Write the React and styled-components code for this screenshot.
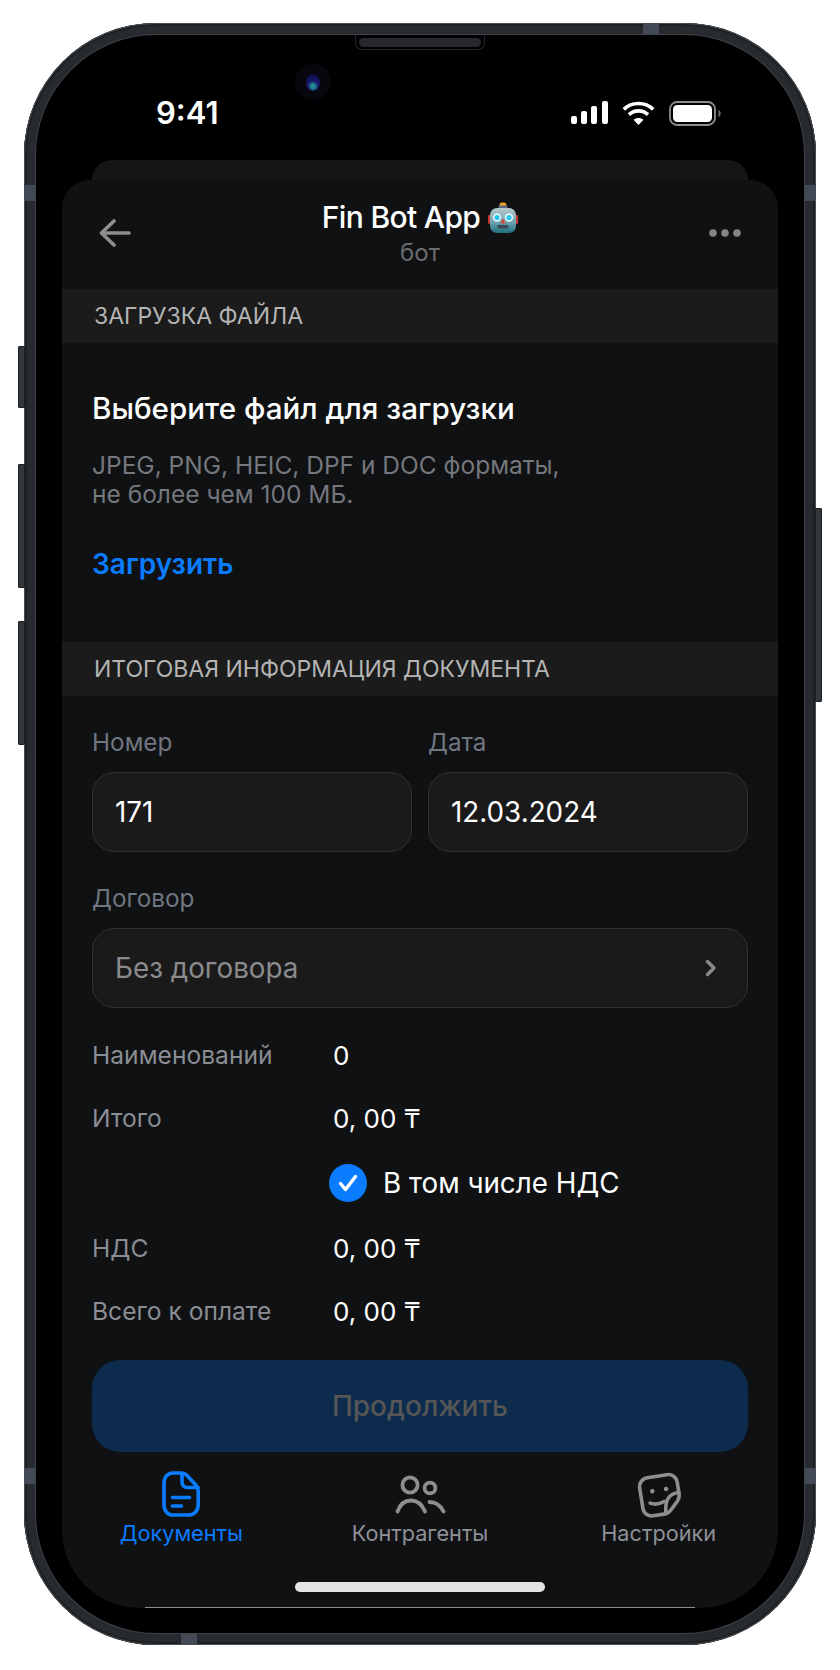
import React from "react";
import styled, { createGlobalStyle } from "styled-components";

const GlobalStyle = createGlobalStyle`
  html, body {
    margin: 0;
    background: #ffffff;
    font-family: Inter, "Noto Sans", sans-serif;
    -webkit-font-smoothing: antialiased;
  }
`;

const Page = styled.div`
  width: 840px;
  height: 1670px;
  box-sizing: border-box;
  padding: 23px 24px 25px;
  background: #ffffff;
  overflow: hidden;
`;

const Phone = styled.div`
  position: relative;
  height: 100%;
  box-sizing: border-box;
  padding: 12px;
  border-radius: 132px;
  background: #272b2f;
  box-shadow: inset 0 0 0 1px #4a4e51, inset 0 0 0 3px #1d2124, inset 0 0 0 11px #272b2f;
`;

const SideButton = styled.span`
  position: absolute;
  top: ${p => p.$top}px;
  height: ${p => p.$height}px;
  ${p => (p.$right ? "right: -6px;" : "left: -6px;")}
  width: 7px;
  border-radius: 2px;
  background: #33383c;
  box-shadow: inset 0 0 0 1px #1b1e21;
`;

const Antenna = styled.span`
  position: absolute;
  background: #444a55;
  ${p => p.$side === "left" && `left: 0; top: ${p.$at}px; width: 12px; height: 16px;`}
  ${p => p.$side === "right" && `right: 0; top: ${p.$at}px; width: 12px; height: 16px;`}
  ${p => p.$side === "top" && `top: 0; left: ${p.$at}px; width: 16px; height: 12px;`}
  ${p => p.$side === "bottom" && `bottom: 0; left: ${p.$at}px; width: 16px; height: 12px;`}
`;

const Screen = styled.div`
  position: relative;
  height: 100%;
  box-sizing: border-box;
  display: flex;
  flex-direction: column;
  align-items: center;
  border-radius: 120px;
  background: #000000;
  box-shadow: 0 0 0 1px #3f4347;
  overflow: hidden;
`;

const Speaker = styled.div`
  position: absolute;
  top: 0;
  left: 319px;
  width: 130px;
  height: 15px;
  box-sizing: border-box;
  border: 1px solid #22252a;
  border-top: none;
  border-radius: 0 0 7px 7px;
  padding: 3px 3px 2px;
  &::after {
    content: "";
    display: block;
    height: 100%;
    border-radius: 5px;
    background: #26282b;
  }
`;

const Camera = styled.div`
  position: absolute;
  top: 29px;
  left: 259px;
  width: 36px;
  height: 36px;
  display: flex;
  align-items: center;
  justify-content: center;
  border-radius: 50%;
  background: #07070d;
`;

const Lens = styled.div`
  width: 14px;
  height: 17px;
  border-radius: 50%;
  background: radial-gradient(circle at 50% 72%, #1d8a8f 0 14%, #16166a 38%, #0b0b3a 100%);
`;

const StatusBar = styled.div`
  width: 100%;
  height: 125px;
  flex: none;
  box-sizing: border-box;
  display: flex;
  align-items: flex-start;
  justify-content: space-between;
  padding: 56px 83px 0 120px;
`;

const Time = styled.div`
  color: #ffffff;
  font-size: 31px;
  font-weight: 600;
  line-height: 44px;
`;

const StatusIcons = styled.div`
  display: flex;
  align-items: flex-start;
  gap: 14px;
  margin-top: 10px;
`;

const BackSheet = styled.div`
  width: 656px;
  height: 20px;
  flex: none;
  border-radius: 26px 26px 0 0;
  background: #151618;
`;

const Sheet = styled.div`
  position: relative;
  width: 716px;
  height: 1428px;
  flex: none;
  box-sizing: border-box;
  display: flex;
  flex-direction: column;
  border-radius: 28px 28px 78px 78px;
  background: #101113;
  overflow: hidden;
  &::after {
    content: "";
    position: absolute;
    left: 83px;
    right: 83px;
    bottom: 0;
    height: 1px;
    background: #8a8a8a;
  }
`;

const NavBar = styled.div`
  height: 109px;
  flex: none;
  box-sizing: border-box;
  display: flex;
  align-items: flex-start;
  justify-content: space-between;
  padding: 39px 37px 0 37px;
`;

const NavTitle = styled.div`
  display: flex;
  flex-direction: column;
  align-items: center;
  margin-top: -21px;
`;

const TitleRow = styled.div`
  display: flex;
  align-items: center;
  gap: 8px;
  height: 38px;
  color: #ffffff;
  font-size: 30px;
  font-weight: 500;
  letter-spacing: -0.65px;
`;

const Subtitle = styled.div`
  color: #6b6c6e;
  font-size: 24px;
  line-height: 28px;
  margin-top: 3px;
`;

const NavDots = styled.div`
  margin-top: 10px;
  display: flex;
`;

const SectionBand = styled.div`
  height: 54px;
  flex: none;
  display: flex;
  align-items: center;
  padding-left: 32px;
  background: #1b1b1b;
  color: #b4b4b4;
  font-size: 23px;
`;

const Upload = styled.div`
  height: 299px;
  flex: none;
  box-sizing: border-box;
  padding: 48px 30px 0 30px;
`;

const UploadTitle = styled.div`
  color: #ffffff;
  font-size: 29.6px;
  font-weight: 500;
  line-height: 34px;
`;

const Hint = styled.div`
  margin-top: 26px;
  color: #74777d;
  font-size: 24.5px;
  line-height: 29px;
`;

const UploadLink = styled.div`
  margin-top: 39px;
  color: #0a7cff;
  font-size: 28px;
  font-weight: 600;
  line-height: 32px;
`;

const Form = styled.div`
  flex: none;
  display: flex;
  flex-direction: column;
  padding: 31px 30px 0;
`;

const FieldGrid = styled.div`
  display: grid;
  grid-template-columns: 320px 320px;
  column-gap: 16px;
`;

const FieldLabel = styled.div`
  color: #6f7680;
  font-size: 24.3px;
  line-height: 30px;
  margin-bottom: 15px;
`;

const FieldBox = styled.div`
  height: 80px;
  box-sizing: border-box;
  display: flex;
  align-items: center;
  justify-content: space-between;
  padding: 0 30px 0 22px;
  border: 1px solid #303032;
  border-radius: 22px;
  background: #1a1a1b;
  color: ${p => (p.$muted ? "#8b8b8e" : "#ffffff")};
  font-size: 27.8px;
`;

const ContractField = styled.div`
  margin-top: 31px;
`;

const Summary = styled.div`
  display: flex;
  flex-direction: column;
  gap: 31px;
  margin-top: 31px;
`;

const SummaryRow = styled.div`
  display: grid;
  grid-template-columns: 241px 1fr;
  height: 32px;
  align-items: center;
  color: #8a8d93;
  font-size: 24.6px;
`;

const SummaryValue = styled.div`
  color: #ffffff;
  font-size: 26px;
`;

const CheckRow = styled.div`
  display: flex;
  align-items: center;
  gap: 16px;
  height: 38px;
  margin: -1px 0 -1px 237px;
  color: #ffffff;
  font-size: 27.8px;
`;

const CheckMark = styled.div`
  width: 38px;
  height: 38px;
  display: flex;
  align-items: center;
  justify-content: center;
  border-radius: 50%;
  background: #0a7cff;
`;

const ContinueButton = styled.div`
  height: 92px;
  margin-top: 33px;
  display: flex;
  align-items: center;
  justify-content: center;
  border-radius: 28px;
  background: #0d2b4d;
  color: #565656;
  font-size: 28px;
  font-weight: 500;
`;

const TabBar = styled.div`
  flex: none;
  display: grid;
  grid-template-columns: repeat(3, 1fr);
  padding-top: 18px;
`;

const Tab = styled.div`
  display: flex;
  flex-direction: column;
  align-items: center;
  color: ${p => (p.$active ? "#0a7cff" : "#8e9097")};
  font-size: 21.7px;
  line-height: 30px;
`;

const TabIcon = styled.div`
  height: 48px;
  display: flex;
  align-items: center;
  justify-content: center;
`;

const HomeIndicator = styled.div`
  width: 250px;
  height: 10px;
  flex: none;
  align-self: center;
  margin-top: 34px;
  border-radius: 5px;
  background: #e4e4e4;
`;

const SignalIcon = () => (
  <svg width="37" height="24" viewBox="0 0 37 24" fill="#fff">
    <rect x="0" y="15" width="6" height="8" rx="2" />
    <rect x="10" y="10" width="6" height="13" rx="2" />
    <rect x="20" y="5" width="6" height="18" rx="2" />
    <rect x="31" y="0" width="6" height="23" rx="2" />
  </svg>
);

const WifiIcon = () => (
  <svg width="33" height="24" viewBox="0 0 33 24" fill="none" stroke="#fff" strokeWidth="3.6">
    <path d="M1.8 8.4C10 .6 23 .6 31.2 8.4" />
    <path d="M7 13.6c5.4-5 13.6-5 19 0" />
    <path d="M16.5 24l-5-5.2c2.9-2.4 7.1-2.4 10 0z" fill="#fff" stroke="none" />
  </svg>
);

const BatteryIcon = () => (
  <svg width="52" height="25" viewBox="0 0 52 25">
    <rect x="1" y="1" width="45" height="23" rx="7" fill="none" stroke="#8d8d8d" strokeWidth="1.8" />
    <rect x="4" y="4" width="39" height="17" rx="4.5" fill="#fff" />
    <path d="M49.5 9c1.5.6 2.2 2 2.2 3.5s-.7 2.9-2.2 3.5z" fill="#6d6d6d" />
  </svg>
);

const BackIcon = () => (
  <svg width="32" height="28" viewBox="0 0 32 28" fill="none" stroke="#8f8f8f" strokeWidth="3.6" strokeLinecap="round" strokeLinejoin="round">
    <path d="M30 14H3" />
    <path d="M15 2L2.5 14 15 26" />
  </svg>
);

const DotsIcon = () => (
  <svg width="32" height="8" viewBox="0 0 32 8" fill="#858585">
    <circle cx="4" cy="4" r="3.8" />
    <circle cx="16" cy="4" r="3.8" />
    <circle cx="28" cy="4" r="3.8" />
  </svg>
);

const RobotIcon = () => (
  <svg width="30" height="31" viewBox="0 0 30 31" role="img" aria-label="🤖">
    <defs>
      <linearGradient id="robotHead" x1="0" y1="0" x2="0" y2="1">
        <stop offset="0" stopColor="#b9c6cc" />
        <stop offset="0.55" stopColor="#6fa6b2" />
        <stop offset="1" stopColor="#1d6f80" />
      </linearGradient>
    </defs>
    <rect x="11.5" y="0.5" width="7" height="5" rx="2.5" fill="#f0a31c" />
    <rect x="10.5" y="3.5" width="9" height="4" rx="1" fill="#5d6a86" />
    <rect x="0" y="13" width="3" height="9" rx="1.2" fill="#c8352f" />
    <rect x="27" y="13" width="3" height="9" rx="1.2" fill="#c8352f" />
    <rect x="2" y="6" width="26" height="25" rx="7" fill="url(#robotHead)" />
    <circle cx="9" cy="15.5" r="4.2" fill="#e9f4f7" />
    <circle cx="21" cy="15.5" r="4.2" fill="#e9f4f7" />
    <circle cx="9" cy="15.5" r="2.6" fill="#25c6ee" />
    <circle cx="21" cy="15.5" r="2.6" fill="#25c6ee" />
    <path d="M15 16.5l2.6 5h-5.2z" fill="#d8423a" />
    <rect x="9.5" y="23" width="11" height="3.4" rx="1" fill="#3d4a55" />
  </svg>
);

const ChevronIcon = () => (
  <svg width="12" height="18" viewBox="0 0 12 18" fill="none" stroke="#8a8a8c" strokeWidth="3.4" strokeLinecap="round" strokeLinejoin="round">
    <path d="M2.5 2.500L9 9l-6.500 6.500" />
  </svg>
);

const CheckIcon = () => (
  <svg width="20" height="18" viewBox="0 0 20 18" fill="none" stroke="#fff" strokeWidth="3.4" strokeLinecap="round" strokeLinejoin="round">
    <path d="M2.5 9.500L7.500 15.500 17.500 2.500" />
  </svg>
);

const DocumentIcon = () => (
  <svg width="38" height="46" viewBox="0 0 38 46" fill="none" stroke="#0a7cff" strokeWidth="3.6" strokeLinecap="round" strokeLinejoin="round">
    <path d="M11 2h8c2.400 0 4.400.9 6 2.600l8.400 9c1.600 1.700 2.800 3.800 2.800 6.200V34c0 5.800-4.200 10-10 10H11C5.800 44 2 39.800 2 34V12C2 6.200 5.800 2 11 2z" />
    <path d="M20 2.500V11c0 3.400 2.200 5.500 5.500 5.500H36" />
    <path d="M10.500 26.500h17" />
    <path d="M10.500 35h9" />
  </svg>
);

const PeopleIcon = () => (
  <svg width="52" height="44" viewBox="0 0 52 44" fill="none" stroke="#8e8e8e" strokeWidth="3.8" strokeLinecap="round">
    <circle cx="16" cy="13" r="7.600" />
    <circle cx="36" cy="16" r="5.400" />
    <path d="M3.500 39.500C6 32.500 10.500 28.500 17 28.500s11 4 14 11" />
    <path d="M35.500 30c6.500 0 11 3.500 14 9.500" />
  </svg>
);

const StickerIcon = () => (
  <svg width="48" height="48" viewBox="0 0 48 48" fill="none" stroke="#8e8e8e" strokeWidth="3.6" strokeLinecap="round" strokeLinejoin="round">
    <g transform="translate(1 1) rotate(-9 24 24)">
      <path d="M14 5h20c5 0 9 4 9 9v12c0 3-1 5-3 7l-8 8c-2 2-4 2.500-7 2.500H14c-5 0-9-4-9-9V14c0-5 4-9 9-9z" />
      <path d="M43 24.500c-9.500-.5-15.500 5-16 19" />
      <path d="M13 30.500c4.500 2.500 9 2.500 14 .5" />
      <circle cx="17" cy="19" r="2.300" fill="#8e8e8e" stroke="none" />
      <circle cx="31" cy="19" r="2.300" fill="#8e8e8e" stroke="none" />
    </g>
  </svg>
);

const summary = [
  { label: "Наименований", value: "0" },
  { label: "Итого", value: "0, 00 ₸" }
];

const totals = [
  { label: "НДС", value: "0, 00 ₸" },
  { label: "Всего к оплате", value: "0, 00 ₸" }
];

export default function App() {
  return (
    <Page>
      <GlobalStyle />
      <Phone>
        <SideButton $top={323} $height={62} />
        <SideButton $top={441} $height={124} />
        <SideButton $top={598} $height={124} />
        <SideButton $right $top={485} $height={194} />
        <Antenna $side="left" $at={162} />
        <Antenna $side="right" $at={162} />
        <Antenna $side="left" $at={1445} />
        <Antenna $side="right" $at={1445} />
        <Antenna $side="top" $at={619} />
        <Antenna $side="bottom" $at={157} />
        <Screen>
          <Speaker />
          <Camera>
            <Lens />
          </Camera>
          <StatusBar>
            <Time>9:41</Time>
            <StatusIcons>
              <SignalIcon />
              <WifiIcon />
              <BatteryIcon />
            </StatusIcons>
          </StatusBar>
          <BackSheet />
          <Sheet>
            <NavBar>
              <BackIcon />
              <NavTitle>
                <TitleRow>
                  Fin Bot App
                  <RobotIcon />
                </TitleRow>
                <Subtitle>бот</Subtitle>
              </NavTitle>
              <NavDots>
                <DotsIcon />
              </NavDots>
            </NavBar>
            <SectionBand>ЗАГРУЗКА ФАЙЛА</SectionBand>
            <Upload>
              <UploadTitle>Выберите файл для загрузки</UploadTitle>
              <Hint>
                JPEG, PNG, HEIC, DPF и DOC форматы,
                <br />
                не более чем 100 МБ.
              </Hint>
              <UploadLink>Загрузить</UploadLink>
            </Upload>
            <SectionBand>ИТОГОВАЯ ИНФОРМАЦИЯ ДОКУМЕНТА</SectionBand>
            <Form>
              <FieldGrid>
                <div>
                  <FieldLabel>Номер</FieldLabel>
                  <FieldBox>171</FieldBox>
                </div>
                <div>
                  <FieldLabel>Дата</FieldLabel>
                  <FieldBox>12.03.2024</FieldBox>
                </div>
              </FieldGrid>
              <ContractField>
                <FieldLabel>Договор</FieldLabel>
                <FieldBox $muted>
                  Без договора
                  <ChevronIcon />
                </FieldBox>
              </ContractField>
              <Summary>
                {summary.map(row => (
                  <SummaryRow key={row.label}>
                    {row.label}
                    <SummaryValue>{row.value}</SummaryValue>
                  </SummaryRow>
                ))}
                <CheckRow>
                  <CheckMark>
                    <CheckIcon />
                  </CheckMark>
                  В том числе НДС
                </CheckRow>
                {totals.map(row => (
                  <SummaryRow key={row.label}>
                    {row.label}
                    <SummaryValue>{row.value}</SummaryValue>
                  </SummaryRow>
                ))}
              </Summary>
              <ContinueButton>Продолжить</ContinueButton>
            </Form>
            <TabBar>
              <Tab $active>
                <TabIcon>
                  <DocumentIcon />
                </TabIcon>
                Документы
              </Tab>
              <Tab>
                <TabIcon>
                  <PeopleIcon />
                </TabIcon>
                Контрагенты
              </Tab>
              <Tab>
                <TabIcon>
                  <StickerIcon />
                </TabIcon>
                Настройки
              </Tab>
            </TabBar>
            <HomeIndicator />
          </Sheet>
        </Screen>
      </Phone>
    </Page>
  );
}
